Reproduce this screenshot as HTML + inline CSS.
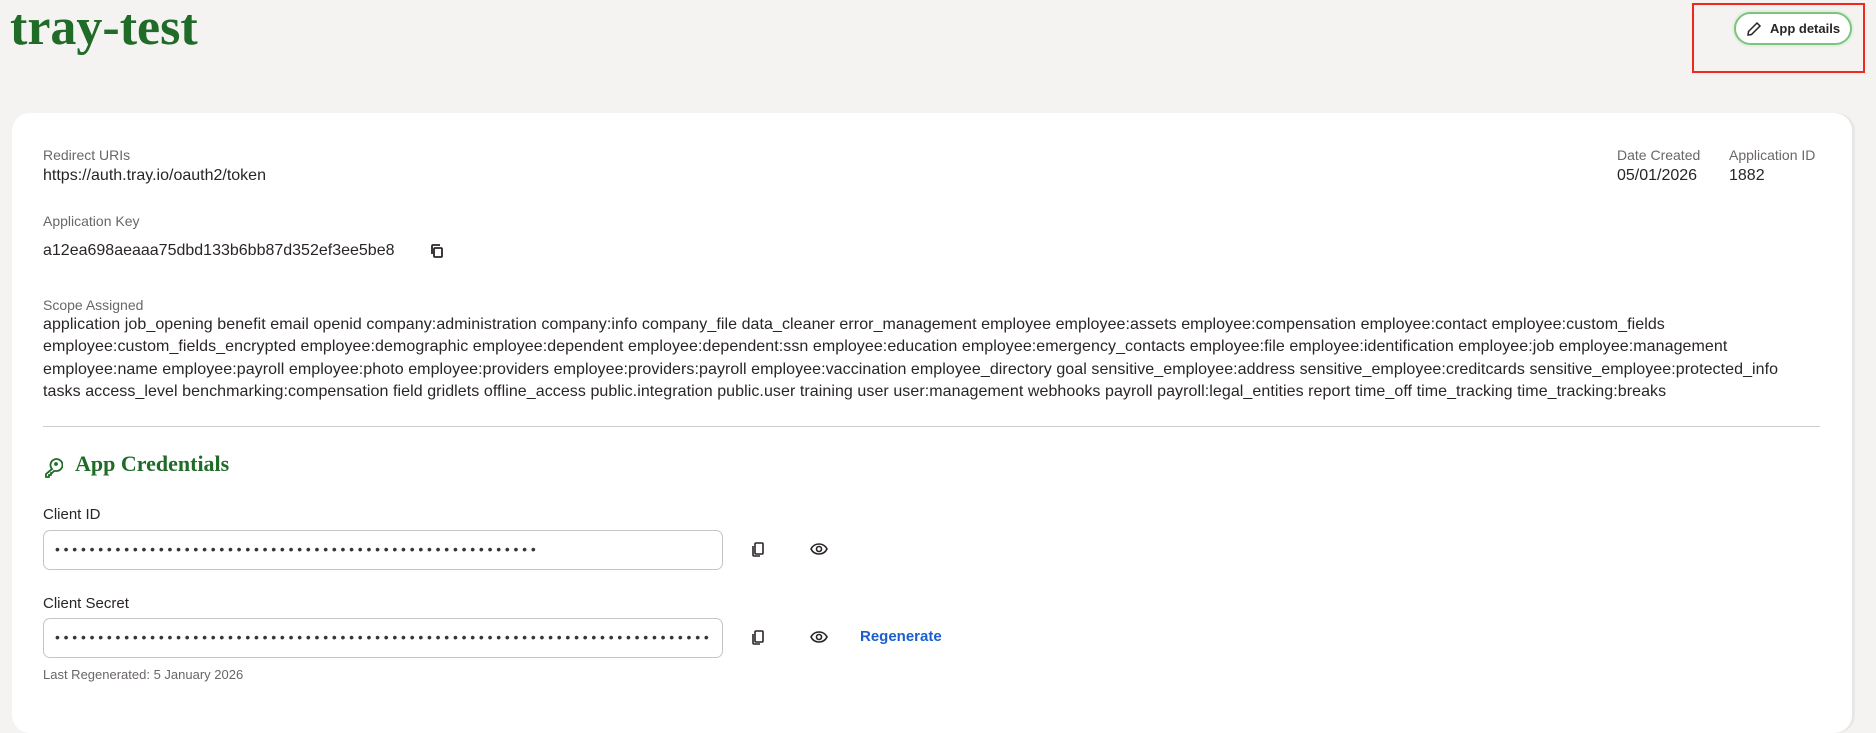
<!DOCTYPE html>
<html><head><meta charset="utf-8"><style>
*{margin:0;padding:0;box-sizing:border-box}
body{width:1876px;height:704px;background:#f4f3f1;font-family:"Liberation Sans",sans-serif;color:#2a2525;position:relative;overflow:hidden}
.abs{position:absolute;white-space:nowrap}
h1{position:absolute;left:10px;top:0px;font-family:"Liberation Serif",serif;font-weight:bold;font-size:52px;color:#1f6b27;letter-spacing:0px;line-height:56px}
.btn{left:1734px;top:12px;width:118px;height:33px;border:2px solid #7cc47e;border-radius:17px;background:#fff;font-size:13px;font-weight:bold;display:flex;align-items:center;padding-left:10px;gap:8px;box-shadow:0 0 0 2px #e4efe3}
.red{left:1692px;top:3px;width:173px;height:70px;border:2px solid #f0281e}
.card{left:12px;top:113px;width:1840px;height:620px;background:#fff;border-radius:18px;box-shadow:3px 0 0 #e8e7e5}
.lbl{font-size:14px;color:#6b6666}
.val{font-size:16px;color:#2a2525}
.scope{left:43px;top:314px;font-size:16px;line-height:22.4px;color:#2a2525;letter-spacing:0.07px}
.hr{left:43px;top:426px;width:1777px;height:1px;background:#cfcccc}
.h2{left:75px;top:451px;font-family:"Liberation Serif",serif;font-weight:bold;font-size:22px;color:#1f6b27}
.inp{left:43px;width:680px;height:40px;border:1px solid #c8c4c4;border-radius:7px;font-size:14px;letter-spacing:3.75px;padding:10px 0 0 11px;color:#3a3535;overflow:hidden}
.link{color:#1a5fd0;font-size:15px;font-weight:bold}
</style></head><body>
<h1>tray-test</h1>
<div class="abs btn"><svg width="16" height="16" viewBox="0 0 16 16" fill="none" stroke="#2a2525" stroke-width="1.5"><path d="M11 2l3 3-8.5 8.5L2 14l.5-3.5z"/></svg>App details</div>
<div class="abs red"></div>
<div class="abs card"></div>
<div class="abs lbl" style="left:43px;top:147px">Redirect URIs</div>
<div class="abs val" style="left:43px;top:167px">https://auth.tray.io/oauth2/token</div>
<div class="abs lbl" style="left:1617px;top:147px">Date Created</div>
<div class="abs val" style="left:1617px;top:167px">05/01/2026</div>
<div class="abs lbl" style="left:1729px;top:147px">Application ID</div>
<div class="abs val" style="left:1729px;top:167px">1882</div>
<div class="abs lbl" style="left:43px;top:213px">Application Key</div>
<div class="abs val" style="left:43px;top:242px">a12ea698aeaaa75dbd133b6bb87d352ef3ee5be8</div>
<svg class="abs" style="left:428px;top:242px" width="18" height="18" viewBox="0 0 18 18" fill="none" stroke="#2a2525" stroke-width="1.8"><rect x="6" y="6" width="8" height="9" rx="1"/><path d="M4 12V4a1 1 0 011-1h7"/></svg>
<div class="abs lbl" style="left:43px;top:297px">Scope Assigned</div>
<div class="abs scope">application job_opening benefit email openid company:administration company:info company_file data_cleaner error_management employee employee:assets employee:compensation employee:contact employee:custom_fields<br>employee:custom_fields_encrypted employee:demographic employee:dependent employee:dependent:ssn employee:education employee:emergency_contacts employee:file employee:identification employee:job employee:management<br>employee:name employee:payroll employee:photo employee:providers employee:providers:payroll employee:vaccination employee_directory goal sensitive_employee:address sensitive_employee:creditcards sensitive_employee:protected_info<br>tasks access_level benchmarking:compensation field gridlets offline_access public.integration public.user training user user:management webhooks payroll payroll:legal_entities report time_off time_tracking time_tracking:breaks</div>
<div class="abs hr"></div>
<svg class="abs" style="left:43px;top:456px" width="20" height="22" viewBox="0 0 20 22" fill="none" stroke="#1f6b27" stroke-width="1.8"><path d="M9 13a6 6 0 1 1 4 2l-2 0-2 2-1 0 0 2-2 0 0 2-3 0 0-3z"/><circle cx="13" cy="8" r="1"/></svg>
<div class="abs h2">App Credentials</div>
<div class="abs val" style="left:43px;top:506px;font-size:15px">Client ID</div>
<div class="abs inp" style="top:530px">••••••••••••••••••••••••••••••••••••••••••••••••••••••••</div>
<div class="abs val" style="left:43px;top:595px;font-size:15px">Client Secret</div>
<div class="abs inp" style="top:618px">••••••••••••••••••••••••••••••••••••••••••••••••••••••••••••••••••••••••••••</div>
<svg class="abs" style="left:750px;top:540px" width="16" height="18" viewBox="0 0 16 18" fill="none" stroke="#2a2525" stroke-width="1.6"><rect x="5" y="3" width="8" height="11" rx="1"/><path d="M3 6v9a1 1 0 001 1h6"/></svg>
<svg class="abs" style="left:810px;top:541px" width="18" height="16" viewBox="0 0 18 16" fill="none" stroke="#2a2525" stroke-width="1.6"><path d="M1 8c2-4 5-5 8-5s6 1 8 5c-2 4-5 5-8 5s-6-1-8-5z"/><circle cx="9" cy="8" r="2.5"/></svg>
<svg class="abs" style="left:750px;top:628px" width="16" height="18" viewBox="0 0 16 18" fill="none" stroke="#2a2525" stroke-width="1.6"><rect x="5" y="3" width="8" height="11" rx="1"/><path d="M3 6v9a1 1 0 001 1h6"/></svg>
<svg class="abs" style="left:810px;top:629px" width="18" height="16" viewBox="0 0 18 16" fill="none" stroke="#2a2525" stroke-width="1.6"><path d="M1 8c2-4 5-5 8-5s6 1 8 5c-2 4-5 5-8 5s-6-1-8-5z"/><circle cx="9" cy="8" r="2.5"/></svg>
<div class="abs link" style="left:860px;top:628px">Regenerate</div>
<div class="abs lbl" style="left:43px;top:667px;font-size:13px">Last Regenerated: 5 January 2026</div>
</body></html>
